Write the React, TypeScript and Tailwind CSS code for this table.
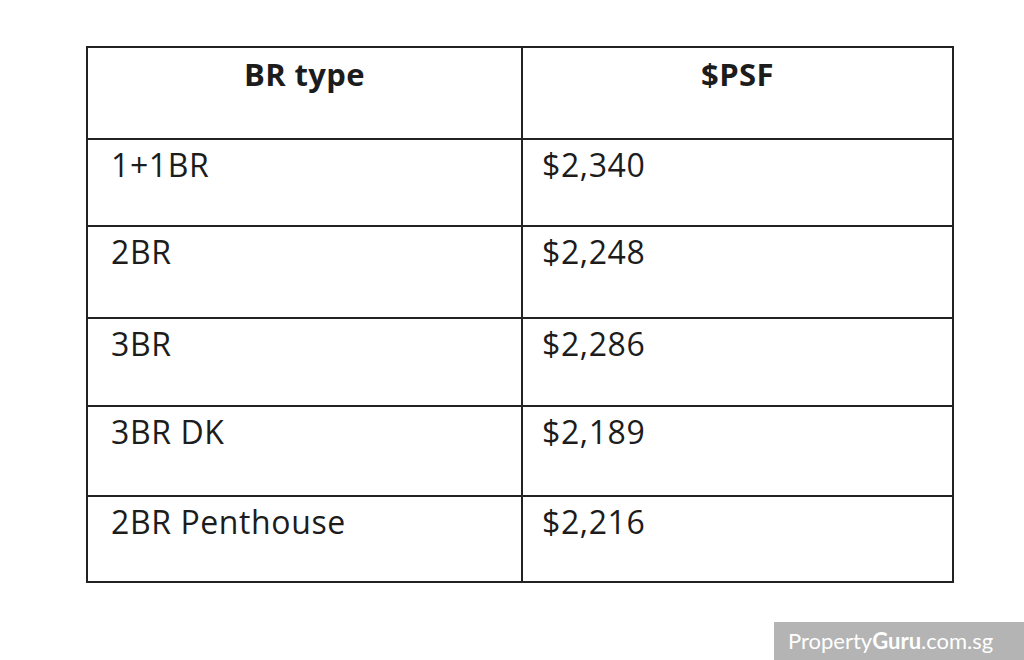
import React from 'react';

const rows = [
  { type: '1+1BR', psf: '$2,340', h: 'h-[87px]' },
  { type: '2BR', psf: '$2,248', h: 'h-[92px]' },
  { type: '3BR', psf: '$2,286', h: 'h-[88px]' },
  { type: '3BR DK', psf: '$2,189', h: 'h-[90px]' },
  { type: '2BR Penthouse', psf: '$2,216', h: 'h-[86px]' },
];

const App: React.FC = () => {
  return (
    <div className="relative w-[1024px] h-[660px] overflow-hidden bg-white font-['Open_Sans',sans-serif] text-[#1c1c1c]">
      <div className="pl-[86px] pt-[46px]">
        <table className="w-[868px] border-collapse border-2 border-[#222]">
          <thead>
            <tr className="h-[92px]">
              <th className="w-[435px] border-2 border-[#222] align-top pt-[11px] text-center text-[31px] leading-none font-bold tracking-[0.4px]">
                BR type
              </th>
              <th className="border-2 border-[#222] align-top pt-[11px] text-center text-[31px] leading-none font-bold tracking-[0.4px]">
                $PSF
              </th>
            </tr>
          </thead>
          <tbody>
            {rows.map((row) => (
              <tr key={row.type} className={row.h}>
                <td className="border-2 border-[#222] align-top pl-[23px] pt-[9px] text-[32px] leading-none tracking-[0.6px]">
                  {row.type}
                </td>
                <td className="border-2 border-[#222] align-top pl-[19px] pt-[9px] text-[32px] leading-none tracking-[0.6px]">
                  {row.psf}
                </td>
              </tr>
            ))}
          </tbody>
        </table>
      </div>

      <div className="absolute right-0 bottom-0 flex h-[38px] w-[250px] items-center bg-[#b4b4b4] pl-[14px] text-[22px] leading-none text-white font-['Lato',sans-serif]">
        Property<span className="font-bold">Guru</span>.com.sg
      </div>
    </div>
  );
};

export default App;
